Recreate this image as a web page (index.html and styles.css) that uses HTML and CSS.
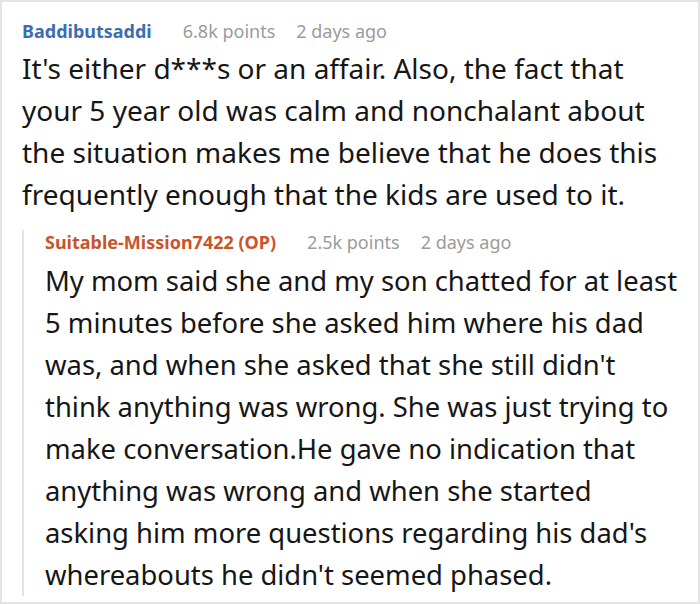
FILE: index.html
```html
<!DOCTYPE html>
<html>
<head>
<meta charset="utf-8">
<link rel="stylesheet" href="styles.css">
</head>
<body>
<div class="frame">
  <div class="comment">
    <div class="meta">
      <span class="author">Baddibutsaddi</span>
      <span class="info">6.8k points</span>
      <span class="info">2 days ago</span>
    </div>
    <div class="body">It's either d***s or an affair. Also, the fact that your 5 year old was calm and nonchalant about the situation makes me believe that he does this frequently enough that the kids are used to it.</div>
    <div class="reply">
      <div class="meta">
        <span class="author op">Suitable-Mission7422 (OP)</span>
        <span class="info">2.5k points</span>
        <span class="info">2 days ago</span>
      </div>
      <div class="body">My mom said she and my son chatted for at least 5 minutes before she asked him where his dad was, and when she asked that she still didn't think anything was wrong. She was just trying to make conversation.He gave no indication that anything was wrong and when she started asking him more questions regarding his dad's whereabouts he didn't seemed phased.</div>
    </div>
  </div>
</div>
</body>
</html>
```
FILE: styles.css
```css
html, body {
  margin: 0;
  padding: 0;
  background: #ffffff;
}
.frame {
  box-sizing: border-box;
  width: 700px;
  height: 604px;
  border: 2px solid #e4e4e4;
  background: #fff;
  overflow: hidden;
}
.comment {
  padding: 17px 17px 0 20px;
  font-family: "Noto Sans", "Open Sans", sans-serif;
}
.meta {
  font-size: 18px;
  line-height: 24px;
  display: flex;
}
.author {
  font-weight: 700;
  color: #3c6db0;
  margin-right: 31px;
}
.author.op {
  color: #c8542b;
  margin-right: 31px;
}
.info {
  color: #9b9b9b;
  margin-right: 21px;
}
.body {
  margin-top: 4px;
  font-size: 28px;
  line-height: 42px;
  color: #161616;
}
.reply {
  margin-top: 15px;
  border-left: 2px solid #e3e3e3;
  padding-left: 21px;
}
.reply .body {
  margin-top: 6px;
  font-size: 27.4px;
}
```
